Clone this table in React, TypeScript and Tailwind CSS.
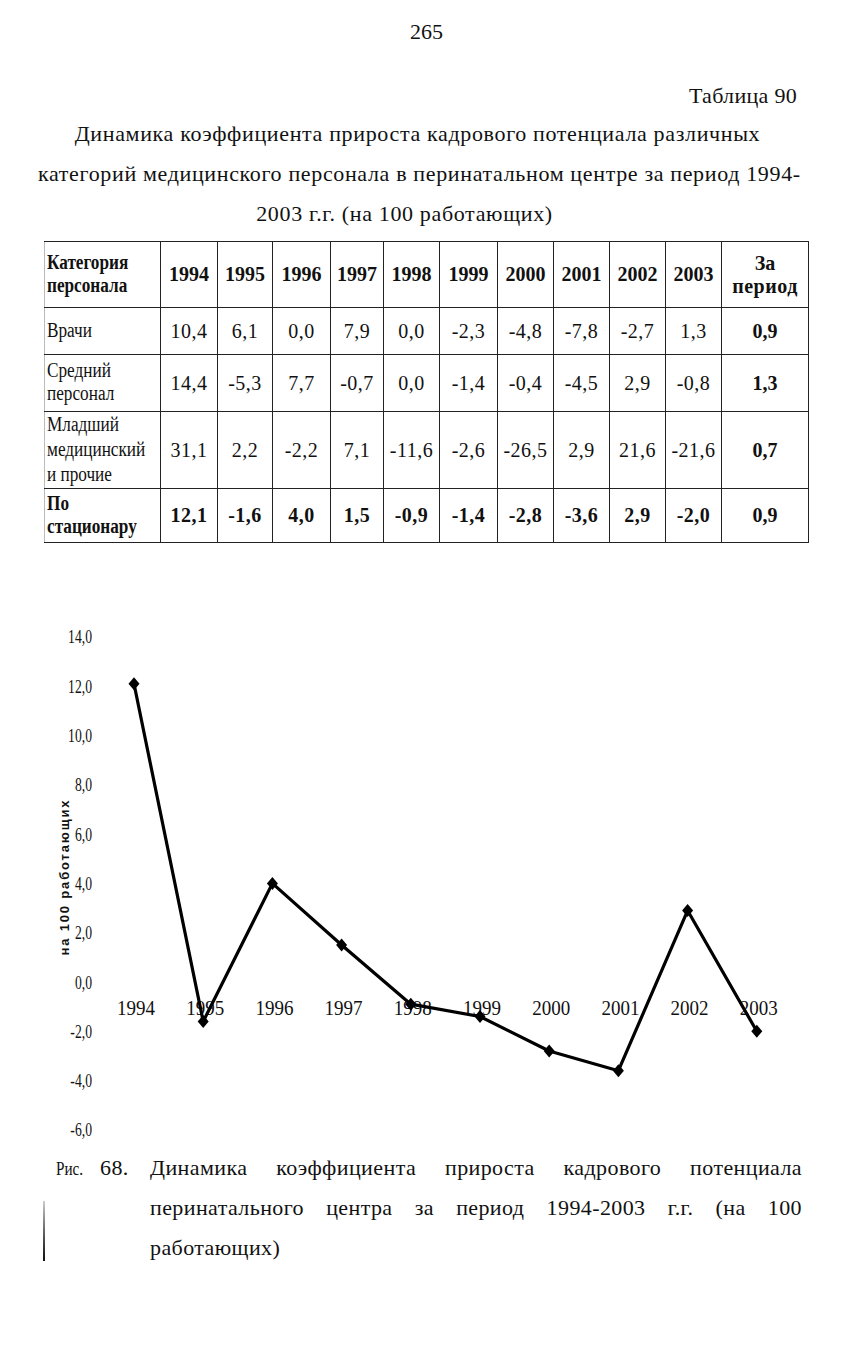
import React from "react";

type Row = {
  label: string[];
  vals: string[];
  total: string;
  bold: boolean;
  h: string;
  lead: string;
};

const rows: Row[] = [
  {
    label: ["Врачи"],
    vals: ["10,4", "6,1", "0,0", "7,9", "0,0", "-2,3", "-4,8", "-7,8", "-2,7", "1,3"],
    total: "0,9",
    bold: false,
    h: "h-[47px]",
    lead: "leading-[23px]",
  },
  {
    label: ["Средний", "персонал"],
    vals: ["14,4", "-5,3", "7,7", "-0,7", "0,0", "-1,4", "-0,4", "-4,5", "2,9", "-0,8"],
    total: "1,3",
    bold: false,
    h: "h-[57px]",
    lead: "leading-[23px]",
  },
  {
    label: ["Младший", "медицинский", "и прочие"],
    vals: ["31,1", "2,2", "-2,2", "7,1", "-11,6", "-2,6", "-26,5", "2,9", "21,6", "-21,6"],
    total: "0,7",
    bold: false,
    h: "h-[76px]",
    lead: "leading-[25px]",
  },
  {
    label: ["По", "стационару"],
    vals: ["12,1", "-1,6", "4,0", "1,5", "-0,9", "-1,4", "-2,8", "-3,6", "2,9", "-2,0"],
    total: "0,9",
    bold: true,
    h: "h-[54px]",
    lead: "leading-[23px]",
  },
];

const years = ["1994", "1995", "1996", "1997", "1998", "1999", "2000", "2001", "2002", "2003"];
const series = [12.1, -1.6, 4.0, 1.5, -0.9, -1.4, -2.8, -3.6, 2.9, -2.0];

const TOP = 620;
const zeroY = 981 - TOP;
const unit = 24.65;
const xAt = (i: number) => 134 + 69.2 * i;
const yAt = (v: number) => zeroY - v * unit;

function Chart() {
  const ticks = [14, 12, 10, 8, 6, 4, 2, 0, -2, -4, -6];
  const pts = series.map((v, i) => `${xAt(i)},${yAt(v)}`).join(" ");
  return (
    <svg width={853} height={525} viewBox="0 0 853 525" className="block">
      {ticks.map((t) => {
        const label = `${t < 0 ? "-" : ""}${Math.abs(t)},0`;
        const digits = String(Math.abs(t)).length + 1;
        const w = (digits * 0.5 + 0.25 + (t < 0 ? 0.333 : 0)) * 19 * 0.72;
        return (
          <text
            key={t}
            x={92}
            y={yAt(t) + 6.5}
            textAnchor="end"
            fontFamily="'Liberation Serif', serif"
            fontSize={19}
            textLength={w}
            lengthAdjust="spacingAndGlyphs"
            fill="#111"
          >
            {label}
          </text>
        );
      })}
      <text
        transform={`translate(69, ${877 - TOP}) rotate(-90)`}
        textAnchor="middle"
        fontFamily="'Liberation Sans', Arial, sans-serif"
        fontWeight="bold"
        fontSize={13}
        textLength={155}
        lengthAdjust="spacing"
        fill="#111"
      >
        на 100 работающих
      </text>
      {years.map((y, i) => (
        <text
          key={y}
          x={xAt(i) + 2}
          y={1007 - TOP + 7}
          textAnchor="middle"
          fontFamily="'Liberation Serif', serif"
          fontSize={20}
          textLength={38}
          lengthAdjust="spacingAndGlyphs"
          fill="#111"
        >
          {y}
        </text>
      ))}
      <polyline points={pts} fill="none" stroke="#000" strokeWidth={3.2} strokeLinejoin="round" />
      {series.map((v, i) => {
        const cx = xAt(i);
        const cy = yAt(v);
        return (
          <polygon
            key={i}
            points={`${cx},${cy - 6.5} ${cx + 5.5},${cy} ${cx},${cy + 6.5} ${cx - 5.5},${cy}`}
            fill="#000"
          />
        );
      })}
    </svg>
  );
}

export default function App() {
  return (
    <div className="w-[853px] h-[1350px] bg-white text-[#111] font-['Liberation_Serif',serif] overflow-hidden">
      <div className="pt-[20px] text-center text-[22px] leading-[24px]">265</div>
      <div className="mt-[40px] pr-[56px] text-right text-[22px] leading-[24px] tracking-[0.3px]">Таблица 90</div>
      <div className="mt-[6px] pl-[38px] pr-[56px] text-center text-[22px] leading-[40px] tracking-[0.65px] whitespace-nowrap">
        <div>Динамика коэффициента прироста кадрового потенциала различных</div>
        <div>категорий медицинского персонала в перинатальном центре за период 1994-</div>
        <div className="pr-[26px]">2003 г.г. (на 100 работающих)</div>
      </div>

      <div className="mt-[7px] ml-[44px]">
        <table className="table-fixed border-collapse w-[764px]">
          <colgroup>
            <col className="w-[116px]" />
            <col className="w-[57px]" />
            <col className="w-[55px]" />
            <col className="w-[58px]" />
            <col className="w-[53px]" />
            <col className="w-[56px]" />
            <col className="w-[58px]" />
            <col className="w-[56px]" />
            <col className="w-[56px]" />
            <col className="w-[56px]" />
            <col className="w-[56px]" />
            <col className="w-[87px]" />
          </colgroup>
          <tbody>
            <tr className="h-[66px]">
              <td className="border border-l-[#bbb] border-[#222] p-0 pl-[2px] text-left align-middle">
                <span className="inline-block origin-left scale-x-[0.86] font-bold text-[20px] leading-[23px] whitespace-nowrap">
                  Категория
                  <br />
                  персонала
                </span>
              </td>
              {years.map((y) => (
                <td
                  key={y}
                  className="border border-[#222] p-0 text-center align-middle font-bold text-[20px] leading-[23px]"
                >
                  {y}
                </td>
              ))}
              <td className="border border-[#222] p-0 text-center align-middle font-bold text-[20px] leading-[23px]">
                За
                <br />
                <span className="tracking-[0.5px]">период</span>
              </td>
            </tr>
            {rows.map((r, ri) => (
              <tr key={ri} className={r.h}>
                <td className="border border-l-[#bbb] border-[#222] p-0 pl-[2px] text-left align-middle">
                  <span
                    className={`inline-block origin-left scale-x-[0.86] text-[20px] whitespace-nowrap ${r.lead} ${
                      r.bold ? "font-bold" : "font-normal"
                    }`}
                  >
                    {r.label.map((l, li) => (
                      <span key={li} className="block">
                        {l}
                      </span>
                    ))}
                  </span>
                </td>
                {r.vals.map((v, vi) => (
                  <td
                    key={vi}
                    className={`border border-[#222] p-0 text-center align-middle text-[20px] leading-[23px] whitespace-nowrap tracking-[0.5px] ${
                      r.bold ? "font-bold" : "font-normal"
                    }`}
                  >
                    {v}
                  </td>
                ))}
                <td className="border border-[#222] p-0 text-center align-middle text-[20px] leading-[23px] font-bold">
                  {r.total}
                </td>
              </tr>
            ))}
          </tbody>
        </table>
      </div>

      <div className="mt-[78px]">
        <Chart />
      </div>

      <div className="mt-[2px] flex items-start text-[22px] leading-[40px] tracking-[0.4px]">
        <div className="ml-[43px] mt-[53px] w-[2px] h-[60px] bg-gradient-to-b from-[#ccc] to-[#111]" />
        <div className="ml-[11px] w-[94px] flex items-baseline">
          <span className="inline-block origin-left scale-x-[0.8] text-[19px] w-[44px] tracking-normal">Рис.</span>
          <span>68.</span>
        </div>
        <div className="w-[652px]">
          <div className="flex justify-between">
            <span>Динамика</span>
            <span>коэффициента</span>
            <span>прироста</span>
            <span>кадрового</span>
            <span>потенциала</span>
          </div>
          <div className="flex justify-between">
            <span>перинатального</span>
            <span>центра</span>
            <span>за</span>
            <span>период</span>
            <span>1994-2003</span>
            <span>г.г.</span>
            <span>(на</span>
            <span>100</span>
          </div>
          <div>работающих)</div>
        </div>
      </div>
    </div>
  );
}
